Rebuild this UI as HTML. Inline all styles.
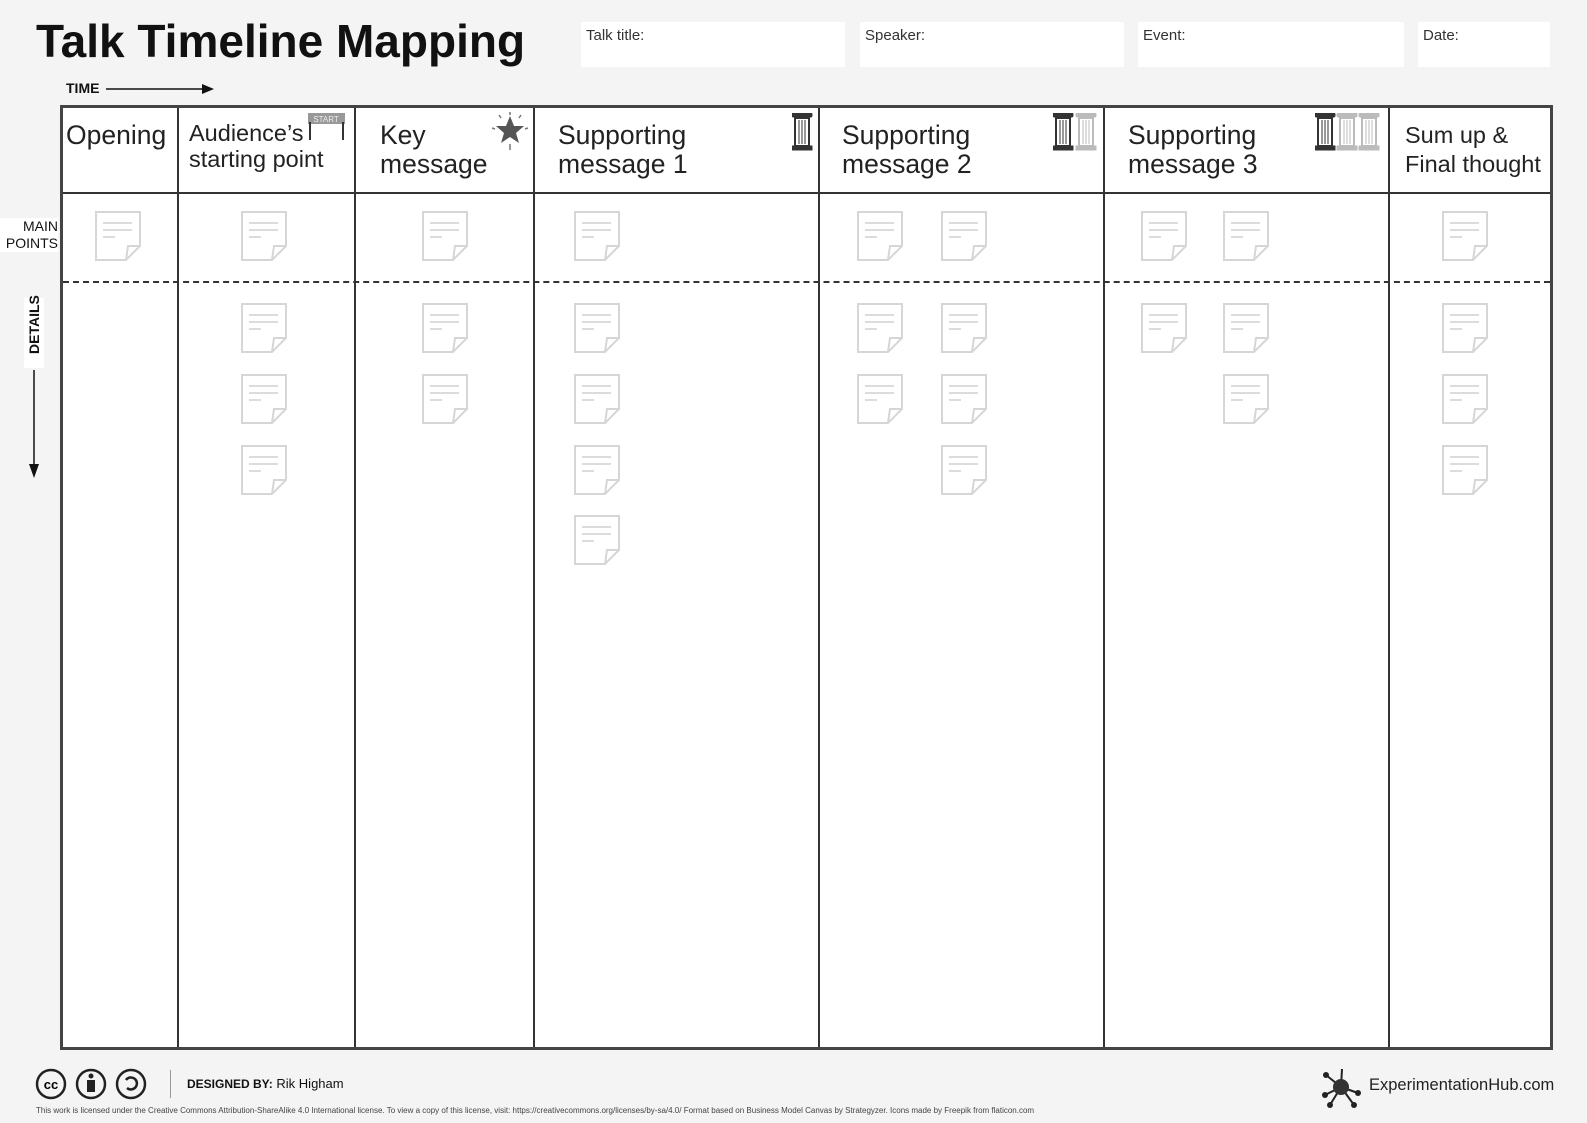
<!DOCTYPE html><html><head><meta charset="utf-8"><style>
body{margin:0;width:1587px;height:1123px;background:#f4f4f4;position:relative;overflow:hidden;font-family:"Liberation Sans",sans-serif;color:#111}
.a{position:absolute}
h1{position:absolute;left:36px;top:14px;margin:0;font-size:46px;font-weight:bold;letter-spacing:0}
.f{position:absolute;top:22px;height:45px;background:#fff;font-size:15px;color:#333;padding:5px 5px;box-sizing:border-box}
.grid{position:absolute;left:60px;top:105px;width:1493px;height:945px;border:3px solid #444;box-sizing:border-box;background:#fff}
.v{position:absolute;top:0;bottom:0;width:2px;background:#333}
.hd{position:absolute;font-size:26.5px;line-height:29px;color:#222;font-weight:300}
</style></head><body>
<h1>Talk Timeline Mapping</h1>
<div class="f" style="left:581px;width:264px">Talk title:</div>
<div class="f" style="left:860px;width:264px">Speaker:</div>
<div class="f" style="left:1138px;width:266px">Event:</div>
<div class="f" style="left:1418px;width:132px">Date:</div>
<div class="a" style="left:66px;top:80px;font-size:14px;font-weight:bold">TIME</div>
<svg class="a" style="left:106px;top:82px" width="110" height="14"><line x1="0" y1="7" x2="98" y2="7" stroke="#111" stroke-width="1.5"/><path d="M96 2 L108 7 L96 12Z" fill="#111"/></svg>
<div class="a" style="left:0;top:218px;width:58px;background:#fff;font-size:14px;line-height:17px;text-align:right">MAIN<br>POINTS</div>
<div class="a" style="left:24px;top:298px;width:20px;height:70px;background:#fff"></div>
<div class="a" style="left:14px;top:326px;transform:rotate(-90deg);font-size:14px;font-weight:bold;width:40px;text-align:center">DETAILS</div>
<svg class="a" style="left:27px;top:370px" width="14" height="110"><line x1="7" y1="0" x2="7" y2="96" stroke="#111" stroke-width="1.5"/><path d="M2 94 L7 108 L12 94Z" fill="#111"/></svg>
<div class="grid">
<div class="a" style="left:0;right:0;top:84px;height:2px;background:#333"></div>
<div class="a" style="left:0;right:0;top:173px;border-top:2px dashed #333"></div>
<div class="v" style="left:114px"></div><div class="v" style="left:291px"></div><div class="v" style="left:470px"></div><div class="v" style="left:755px"></div><div class="v" style="left:1040px"></div><div class="v" style="left:1325px"></div>
</div>
<div class="hd" style="left:66px;top:121px">Opening</div>
<div class="hd" style="left:189px;top:120px;font-size:23.5px;line-height:26px">Audience’s<br>starting point</div>
<div class="hd" style="left:380px;top:121px">Key<br>message</div>
<div class="hd" style="left:558px;top:121px">Supporting<br>message 1</div>
<div class="hd" style="left:842px;top:121px">Supporting<br>message 2</div>
<div class="hd" style="left:1128px;top:121px">Supporting<br>message 3</div>
<div class="hd" style="left:1405px;top:121px;font-size:23.5px;line-height:29px">Sum up &amp;<br>Final thought</div>
<svg class="a" style="left:307px;top:112px" width="40" height="30"><rect x="1" y="1" width="37" height="11" fill="#999"/><text x="19" y="10" font-size="8" text-anchor="middle" fill="#eee" font-family="Liberation Sans">START</text><rect x="2" y="10" width="2" height="18" fill="#333"/><rect x="35" y="10" width="2" height="18" fill="#333"/></svg>
<svg class="a" style="left:490px;top:112px" width="40" height="40"><path d="M20 4 L24 14 L34 14 L26 21 L29 31 L20 25 L11 31 L14 21 L6 14 L16 14Z" fill="#555"/><g stroke="#777" stroke-width="1.5"><line x1="20" y1="0" x2="20" y2="3"/><line x1="20" y1="32" x2="20" y2="38"/><line x1="2" y1="16" x2="5" y2="17"/><line x1="35" y1="17" x2="38" y2="16"/><line x1="9" y1="3" x2="11" y2="6"/><line x1="31" y1="3" x2="29" y2="6"/></g></svg>
<svg width="0" height="0" style="position:absolute"><defs><g id="col"><rect x="0" y="0" width="20" height="4" rx="1.5"/><rect x="3" y="5" width="14" height="28" fill="none" stroke-width="2"/><line x1="7" y1="7" x2="7" y2="31" stroke-width="1"/><line x1="10" y1="7" x2="10" y2="31" stroke-width="1"/><line x1="13" y1="7" x2="13" y2="31" stroke-width="1"/><rect x="0" y="33" width="20" height="4"/></g>
<g id="note"><path d="M2 2 H46 V36 L32 50 H2 Z" fill="#fff" stroke="#d6d6d6" stroke-width="2"/><path d="M46 36 L34 36 L32 50" fill="none" stroke="#d6d6d6" stroke-width="2"/><g stroke="#dcdcdc" stroke-width="2"><line x1="9" y1="13" x2="38" y2="13"/><line x1="9" y1="20" x2="38" y2="20"/><line x1="9" y1="27" x2="21" y2="27"/></g></g></defs></svg>
<svg class="a" style="left:792px;top:113px" width="22" height="40"><use href="#col" fill="#333" stroke="#333"/></svg>
<svg class="a" style="left:1053px;top:113px" width="46" height="40"><use href="#col" fill="#333" stroke="#333"/><use href="#col" x="23" fill="#bbb" stroke="#bbb"/></svg>
<svg class="a" style="left:1315px;top:113px" width="66" height="40"><use href="#col" fill="#333" stroke="#333"/><use href="#col" x="22" fill="#bbb" stroke="#bbb"/><use href="#col" x="44" fill="#bbb" stroke="#bbb"/></svg>
<svg class="a" style="left:0;top:0" width="1587" height="1123" pointer-events="none">
<use href="#note" x="94" y="210"/><use href="#note" x="240" y="210"/><use href="#note" x="421" y="210"/><use href="#note" x="573" y="210"/><use href="#note" x="856" y="210"/><use href="#note" x="940" y="210"/><use href="#note" x="1140" y="210"/><use href="#note" x="1222" y="210"/><use href="#note" x="1441" y="210"/>
<use href="#note" x="240" y="302"/><use href="#note" x="240" y="373"/><use href="#note" x="240" y="444"/>
<use href="#note" x="421" y="302"/><use href="#note" x="421" y="373"/>
<use href="#note" x="573" y="302"/><use href="#note" x="573" y="373"/><use href="#note" x="573" y="444"/><use href="#note" x="573" y="514"/>
<use href="#note" x="856" y="302"/><use href="#note" x="856" y="373"/>
<use href="#note" x="940" y="302"/><use href="#note" x="940" y="373"/><use href="#note" x="940" y="444"/>
<use href="#note" x="1140" y="302"/><use href="#note" x="1222" y="302"/><use href="#note" x="1222" y="373"/>
<use href="#note" x="1441" y="302"/><use href="#note" x="1441" y="373"/><use href="#note" x="1441" y="444"/>
</svg>
<svg class="a" style="left:35px;top:1068px" width="115" height="32"><g fill="none" stroke="#222" stroke-width="2.5"><circle cx="16" cy="16" r="14"/><circle cx="56" cy="16" r="14"/><circle cx="96" cy="16" r="14"/><path d="M91 12 A6 6 0 1 1 92 20"/></g><text x="16" y="21" font-size="13" font-weight="bold" text-anchor="middle" font-family="Liberation Sans">cc</text><circle cx="56" cy="8" r="2.5" fill="#222"/><rect x="52" y="12" width="8" height="12" fill="#222"/></svg>
<div class="a" style="left:170px;top:1070px;width:1px;height:28px;background:#999"></div>
<div class="a" style="left:187px;top:1076px;font-size:13px"><b style="font-size:12px">DESIGNED BY:</b> Rik Higham</div>
<div class="a" style="left:36px;top:1106px;font-size:8px;color:#444;white-space:nowrap">This work is licensed under the Creative Commons Attribution-ShareAlike 4.0 International license. To view a copy of this license, visit: https://creativecommons.org/licenses/by-sa/4.0/ Format based on Business Model Canvas by Strategyzer. Icons made by Freepik from flaticon.com</div>
<svg class="a" style="left:1320px;top:1065px" width="42" height="44"><g stroke="#222" stroke-width="2"><line x1="21" y1="22" x2="6" y2="10"/><line x1="21" y1="22" x2="5" y2="30"/><line x1="21" y1="22" x2="10" y2="40"/><line x1="21" y1="22" x2="34" y2="40"/><line x1="21" y1="22" x2="38" y2="28"/><line x1="21" y1="22" x2="22" y2="4"/></g><circle cx="21" cy="22" r="8" fill="#333"/><g fill="#222"><circle cx="6" cy="10" r="3"/><circle cx="5" cy="30" r="3"/><circle cx="10" cy="40" r="3"/><circle cx="34" cy="40" r="3"/><circle cx="38" cy="28" r="3"/></g></svg>
<div class="a" style="left:1369px;top:1076px;font-size:16.5px;color:#222">ExperimentationHub.com</div>
</body></html>
